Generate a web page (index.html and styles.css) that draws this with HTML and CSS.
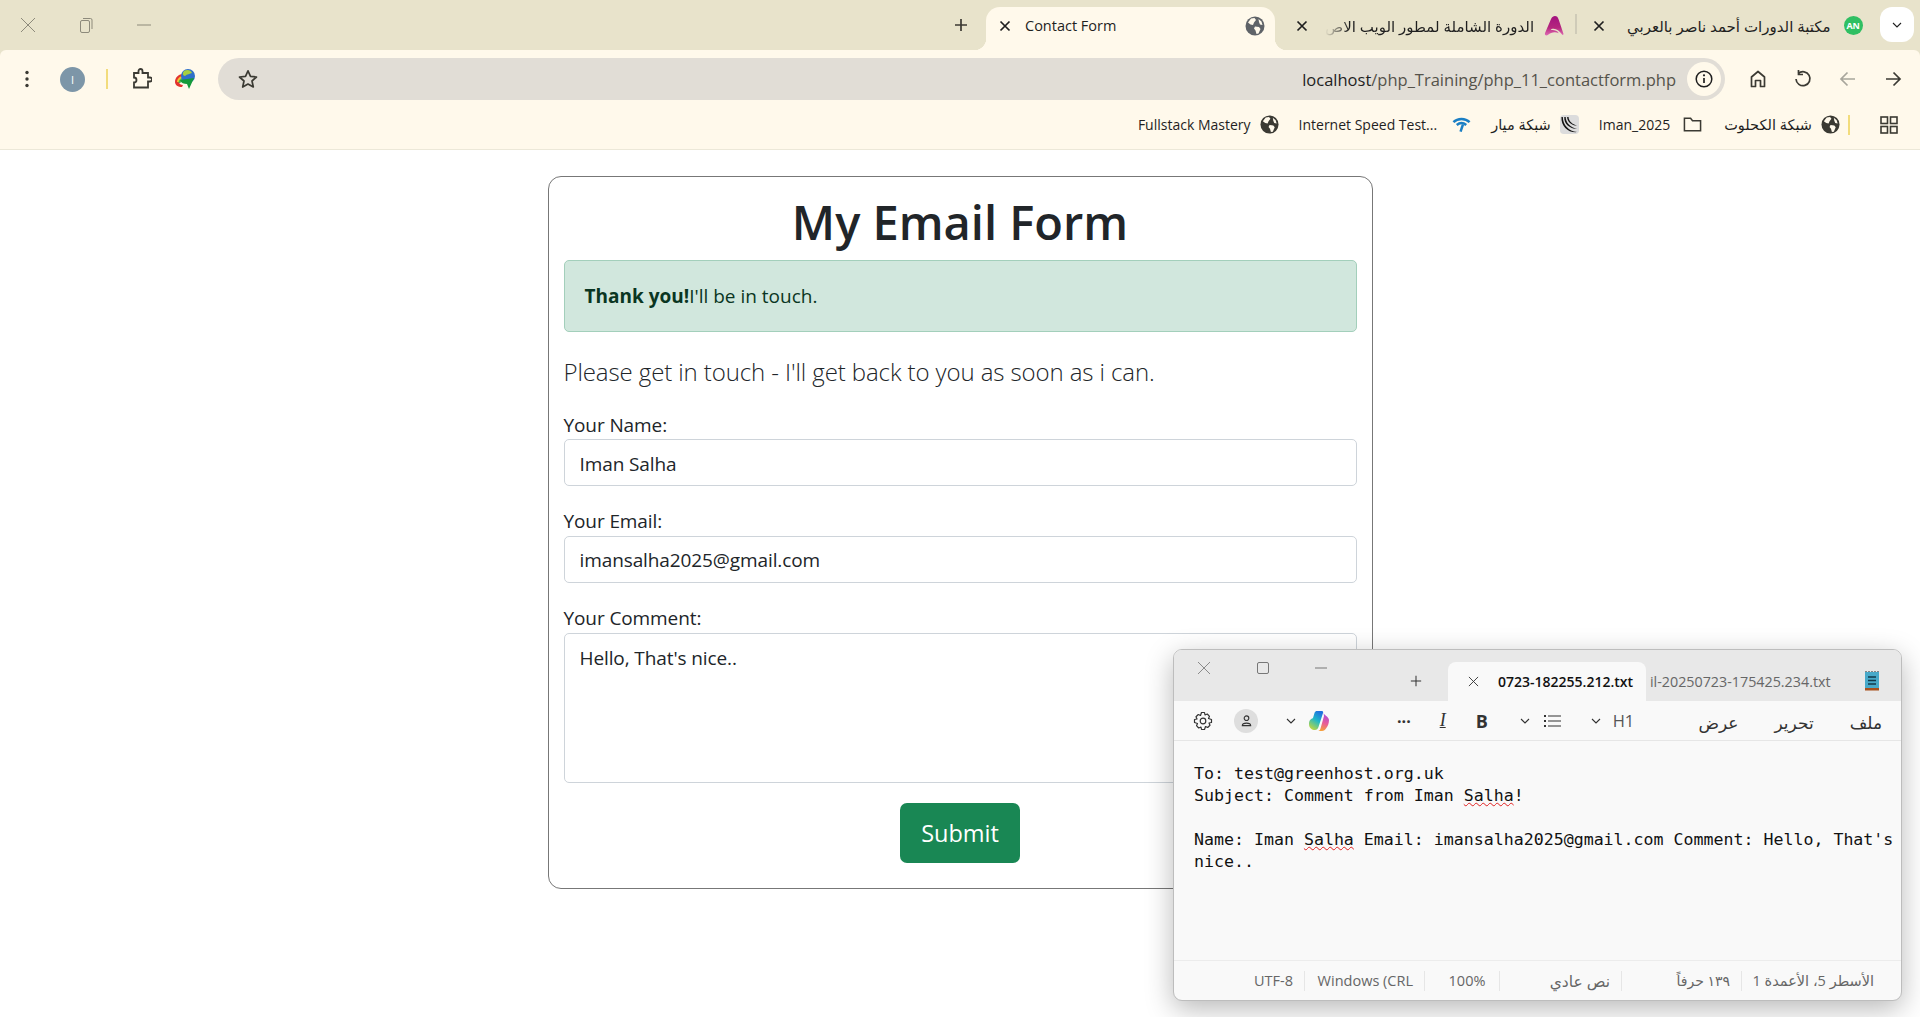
FILE: index.html
```html
<!DOCTYPE html>
<html lang="en">
  <head>
    <meta charset="UTF-8" />
    <meta name="viewport" content="width=device-width, initial-scale=1.0" />
    <title>Contact Form</title>
    <link rel="stylesheet" href="styles.css">
  </head>

  <body>
    <svg class="defs" width="0" height="0">
      <defs>
        <linearGradient id="logoA" x1="0" y1="0" x2="0" y2="1">
          <stop offset="0" stop-color="#a3127f" />
          <stop offset="0.6" stop-color="#b5267e" />
          <stop offset="1" stop-color="#e06cb4" />
        </linearGradient>
        <linearGradient id="cpLeft" x1="0.7" y1="0" x2="0.2" y2="1">
          <stop offset="0" stop-color="#1f6fe0" />
          <stop offset="0.45" stop-color="#1fb8c8" />
          <stop offset="1" stop-color="#c6d83a" />
        </linearGradient>
        <linearGradient id="cpRight" x1="0.6" y1="0" x2="0.4" y2="1">
          <stop offset="0" stop-color="#a24be0" />
          <stop offset="0.55" stop-color="#e85a9a" />
          <stop offset="1" stop-color="#f6a13a" />
        </linearGradient>
      </defs>
      <symbol id="globe" viewBox="0 0 20 20">
        <circle cx="10" cy="10" r="9.500" fill="currentColor" />
        <path d="M6 2.500 9.500 2l1.500 2-2 2.500-1 2.500-2.500-.5L3 6.500zM10 10.500l4 .5 1.500 2-2 4.500-2 .5-1-3.500-1.500-2zM13.500 3l3 2.500 1 3.500-2.500-.5-1-2.500z" fill="#fff9eb" />
      </symbol>
      <symbol id="close" viewBox="0 0 12 12">
        <path d="M1.500 1.500 10.500 10.500M10.500 1.500 1.500 10.500" fill="none" stroke="currentColor" stroke-width="1.700" />
      </symbol>
      <symbol id="chev" viewBox="0 0 12 12">
        <path d="M2 4l4 4 4-4" fill="none" stroke="currentColor" stroke-width="1.100" />
      </symbol>
    </svg>

    <header class="chrome">
      <div class="tabstrip">
        <div class="winctl">
          <svg class="wc" viewBox="0 0 16 16"><path d="M1 1 15 15M15 1 1 15" stroke="#8d8a7b" fill="none" /></svg>
          <svg class="wc" viewBox="0 0 16 16"><rect x="2.500" y="3.500" width="9" height="12" rx="1.500" fill="none" stroke="#8d8a7b" /><path d="M5 1.500h7.500a1.500 1.500 0 0 1 1.500 1.500v9" fill="none" stroke="#8d8a7b" /></svg>
          <svg class="wc" viewBox="0 0 16 16"><path d="M1 8H15" stroke="#8d8a7b" /></svg>
        </div>
        <svg class="newtab" viewBox="0 0 14 14"><path d="M7 1V13M1 7H13" stroke="#3b3a33" stroke-width="1.700" /></svg>
        <div class="tab tab-active">
          <svg class="tab-x"><use href="#close" /></svg>
          <span class="tab-title">Contact Form</span>
          <svg class="tab-ico globe-grey"><use href="#globe" /></svg>
        </div>
        <div class="tab tab-two">
          <svg class="tab-x"><use href="#close" /></svg>
          <span class="tab-title tab-fade" dir="rtl">الدورة الشاملة لمطور الويب الاص</span>
          <svg class="tab-ico" viewBox="0 0 20 21"><path d="M11 0C13 0 14 1 15 4L20 19C20 20 19 20 18.500 19.500 16 16 12.500 13.500 9.500 13.500 8 13.500 7 14 6.500 15 9 14.500 13 15 15 18 11 16.500 7 17 3.500 20 2 21 0 20 .5 18L7 3C8 1 9.500 0 11 0z" fill="url(#logoA)" /></svg>
        </div>
        <div class="tab tab-three">
          <svg class="tab-x"><use href="#close" /></svg>
          <span class="tab-title" dir="rtl">مكتبة الدورات أحمد ناصر بالعربي</span>
          <span class="an-badge">AN</span>
        </div>
        <div class="tab-search">
          <svg class="chev-ico"><use href="#chev" /></svg>
        </div>
      </div>

      <div class="toolbar">
        <svg class="dots" viewBox="0 0 4 18"><circle cx="2" cy="2.500" r="1.700" /><circle cx="2" cy="9" r="1.700" /><circle cx="2" cy="15.500" r="1.700" /></svg>
        <span class="profile">I</span>
        <span class="tool-sep"></span>
        <svg class="tool-ico ext" viewBox="0 0 22 22"><path d="M4 5H8.500V3a2 2 0 0 1 4 0V5H18V9.500H20a2 2 0 0 1 0 4H18V19.500H4V14.500a2.500 2.500 0 0 0 0-5z" fill="none" stroke="#3b3a33" stroke-width="1.800" /></svg>
        <svg class="tool-ico idm" viewBox="0 0 22 22">
          <path d="M1 14C1 9 5 6 9 6L10 9C7 9 5 11 5 14 5 16 7 17 9 17L8 19C4 19 1 17 1 14z" fill="#e3342f" />
          <path d="M3 14C3 11 6 8 9 8L9.500 10C7 10 5.500 12 5.500 14z" fill="#f4c430" />
          <path d="M4.500 15C4.500 12 7 10 9 10L9.500 11.500C8 12 6.500 13.500 6.500 15z" fill="#4cb848" />
          <circle cx="14" cy="8" r="7" fill="#2e6fc9" />
          <path d="M10 3c3-2 7-1 8 2-2 1-5 1-7 3-2 0-3-3-1-5z" fill="#a6cf3e" />
          <path d="M6 12 20 10 15 21 13 16C10 16 7 15 6 12z" fill="#159a3a" />
        </svg>
        <div class="omnibox">
          <svg class="star" viewBox="0 0 20 20"><path d="M10 1.800 12.500 7.400 18.500 8 14 12 15.300 18 10 15 4.700 18 6 12 1.500 8 7.500 7.400z" fill="none" stroke="#3b3a33" stroke-width="1.700" stroke-linejoin="round" /></svg>
          <span class="url"><b>localhost</b>/php_Training/php_11_contactform.php</span>
          <span class="site-info">
            <svg viewBox="0 0 18 18"><circle cx="9" cy="9" r="7.800" fill="none" stroke="#1f1f1f" stroke-width="1.500" /><path d="M9 8V13" stroke="#1f1f1f" stroke-width="1.700" /><circle cx="9" cy="5.300" r="1.100" fill="#1f1f1f" /></svg>
          </span>
        </div>
        <svg class="nav-ico" viewBox="0 0 20 20"><path d="M3.500 17.500V8L10 2.500 16.500 8V17.500H12.500V11.500H7.500V17.500z" fill="none" stroke="#3b3a33" stroke-width="1.700" stroke-linejoin="round" /></svg>
        <svg class="nav-ico" viewBox="0 0 20 20"><path d="M5.300 4.500A7 7 0 1 1 3 10" fill="none" stroke="#3b3a33" stroke-width="1.700" /><path d="M5.500 1V5.500H10" fill="none" stroke="#3b3a33" stroke-width="1.700" /></svg>
        <svg class="nav-ico" viewBox="0 0 20 20"><path d="M17 10H3.500M9.500 3.500 3 10l6.500 6.500" fill="none" stroke="#a8a69c" stroke-width="1.700" /></svg>
        <svg class="nav-ico" viewBox="0 0 20 20"><path d="M3 10H16.500M10.500 3.500 17 10l-6.500 6.500" fill="none" stroke="#3b3a33" stroke-width="1.700" /></svg>
      </div>

      <div class="bookmarks">
        <div class="bm">
          <span>Fullstack Mastery</span>
          <svg class="bm-ico"><use href="#globe" /></svg>
        </div>
        <div class="bm bm-wifi">
          <span>Internet Speed Test...</span>
          <svg class="bm-ico" viewBox="0 0 20 16"><g fill="none" stroke="#1b7fc4" stroke-width="2.600"><path d="M1.500 5.500C6 1 14 1 18.500 5.500" /><path d="M5 8.500C8 6 12 6 15 8.500" /><path d="M11.500 8 9 15.500" /></g></svg>
        </div>
        <div class="bm">
          <span class="bm-ar" dir="rtl">شبكة ميار</span>
          <svg class="bm-ico" viewBox="0 0 20 20"><rect width="20" height="20" rx="4" fill="#dcdcdc" /><path d="M3 2C3 10 9 17 18 18 9 19 1 12 1.500 2zM6 2C6 8 11 13 18 14.500 10 14.500 4 9 4.500 2zM9 2C9 6 13 10 18 11 12 11 7.500 7 7.500 2z" fill="#141414" /></svg>
        </div>
        <div class="bm bm-folder">
          <span>Iman_2025</span>
          <svg class="bm-ico" viewBox="0 0 20 20"><path d="M1.500 3.500H8L10 6H18.500V16.500H1.500z" fill="none" stroke="#3b3a33" stroke-width="1.600" /></svg>
        </div>
        <div class="bm bm-last">
          <span class="bm-ar" dir="rtl">شبكة الكحلوت</span>
          <svg class="bm-ico"><use href="#globe" /></svg>
        </div>
        <span class="bm-sep"></span>
        <svg class="apps" viewBox="0 0 18 18"><g fill="none" stroke="#3b3a33" stroke-width="1.600"><rect x="1" y="1" width="6.500" height="6.500" /><rect x="10.500" y="1" width="6.500" height="6.500" /><rect x="1" y="10.500" width="6.500" height="6.500" /><rect x="10.500" y="10.500" width="6.500" height="6.500" /></g></svg>
      </div>
    </header>

    <main class="card">
      <h1 class="title">My Email Form</h1>
      <div class="alert"><strong>Thank you!</strong>I'll be in touch.</div>
      <p class="lead">Please get in touch - I'll get back to you as soon as i can.</p>
      <form>
        <div class="field">
          <label for="name">Your Name:</label>
          <input id="name" class="control" type="text" value="Iman Salha" />
        </div>
        <div class="field">
          <label for="email">Your Email:</label>
          <input id="email" class="control" type="text" value="imansalha2025@gmail.com" />
        </div>
        <div class="field">
          <label for="comment">Your Comment:</label>
          <textarea id="comment" class="control area">Hello, That's nice..</textarea>
        </div>
        <div class="actions">
          <button type="button" class="btn">Submit</button>
        </div>
      </form>
    </main>

    <section class="notepad">
      <div class="np-title">
        <svg class="np-wc np-close" viewBox="0 0 14 14"><path d="M1 1 13 13M13 1 1 13" stroke="#8a8a8a" fill="none" /></svg>
        <svg class="np-wc np-max" viewBox="0 0 14 14"><rect x="1.500" y="1.500" width="11" height="11" rx="1.500" stroke="#777" fill="none" /></svg>
        <svg class="np-wc np-min" viewBox="0 0 14 14"><path d="M1 7H13" stroke="#777" /></svg>
        <svg class="np-plus" viewBox="0 0 14 14"><path d="M7 1V13M1 7H13" stroke="#333" stroke-width="1.200" /></svg>
        <div class="np-tab">
          <svg class="np-tab-x" viewBox="0 0 12 12"><path d="M1 1 11 11M11 1 1 11" stroke="#333" fill="none" /></svg>
          <span>0723-182255.212.txt</span>
        </div>
        <span class="np-tab-other">il-20250723-175425.234.txt</span>
        <svg class="np-ico" viewBox="0 0 16 20"><rect x="1" y="1" width="14" height="16" fill="#48a9c9" /><rect x="1" y="17" width="14" height="2.500" fill="#a8501c" /><path d="M4 6H12M4 9.500H12M4 13H12" stroke="#10384a" stroke-width="1.400" /><path d="M2 1V0M5 1V0M8 1V0M11 1V0M14 1V0" stroke="#222" /></svg>
      </div>

      <div class="np-tools">
        <svg class="nt gear" viewBox="0 0 20 20"><circle cx="10" cy="10" r="2.800" fill="none" stroke="#333" stroke-width="1.200" /><path d="M8.500 1.500H11.500L12 4 14.300 3 16.500 5.300 15.500 7.500 18.500 8.500V11.500L16 12 17 14.300 14.700 16.500 12.500 15.500 11.500 18.500H8.500L8 16 5.700 17 3.500 14.700 4.500 12.500 1.500 11.500V8.500L4 8 3 5.700 5.300 3.500 7.500 4.500z" fill="none" stroke="#333" stroke-width="1.200" stroke-linejoin="round" /></svg>
        <span class="nt-user"><svg viewBox="0 0 14 14"><circle cx="7" cy="4.500" r="2.500" fill="none" stroke="#333" stroke-width="1.200" /><path d="M2.500 12.500C2.500 9 11.500 9 11.500 12.500z" fill="none" stroke="#333" stroke-width="1.200" /></svg></span>
        <svg class="nt nt-c1"><use href="#chev" /></svg>
        <svg class="nt copilot" viewBox="0 0 20 20">
          <path d="M8 0H13C14 0 14.500 1 14 2L9.500 16C9 18 7.500 19 6 19 3 19 0 17 0 13 0 9 2 8 4 7L5.500 2C6 .5 7 0 8 0z" fill="url(#cpLeft)" />
          <path d="M14.500 1.500C15 5 19.500 5 20 9 20 12 19 15 17 17.500 16 19 15 20 13 20H9C10.500 20 11 19 11.500 17.500L15 5z" fill="url(#cpRight)" />
        </svg>
        <span class="nt-more">···</span>
        <span class="nt-i">I</span>
        <span class="nt-b">B</span>
        <svg class="nt nt-c2"><use href="#chev" /></svg>
        <svg class="nt nt-list" viewBox="0 0 18 14"><path d="M5 2H18M5 7H18M5 12H18" stroke="#333" stroke-width="1.200" /><path d="M1 2H3M1 7H3M1 12H3" stroke="#333" stroke-width="1.800" /></svg>
        <svg class="nt nt-c3"><use href="#chev" /></svg>
        <span class="nt-h1">H1</span>
        <div class="np-menu">
          <span dir="rtl">عرض</span>
          <span dir="rtl">تحرير</span>
          <span dir="rtl">ملف</span>
        </div>
      </div>

      <div class="np-body">To: test@greenhost.org.uk<br>Subject: Comment from Iman <span class="typo">Salha</span>!<br><br>Name: Iman <span class="typo">Salha</span> Email: imansalha2025@gmail.com Comment: Hello, That's<br>nice..</div>

      <div class="np-status">
        <span class="st st-enc">UTF-8</span>
        <span class="st st-eol">Windows (CRL</span>
        <span class="st st-zoom">100%</span>
        <span class="st st-type" dir="rtl">نص عادي</span>
        <span class="st st-count" dir="rtl">١٣٩ حرفاً</span>
        <span class="st st-pos" dir="rtl">الأسطر 5، الأعمدة 1</span>
      </div>
    </section>
  </body>
</html>
```

FILE: styles.css
```css
* {
  box-sizing: border-box;
}

html,
body {
  margin: 0;
  height: 1017px;
  overflow: hidden;
}

body {
  position: relative;
  background: #fff;
  color: #212529;
  font-family: "Open Sans", "DejaVu Sans", sans-serif;
}

.defs {
  position: absolute;
}

/* browser chrome */
.chrome {
  background: #e8e3cb;
  color: #1f1f1f;
}

.tabstrip {
  height: 50px;
  display: flex;
  align-items: flex-end;
}

.winctl {
  display: flex;
  align-items: center;
  gap: 42px;
  height: 50px;
  padding-left: 20px;
  width: 954px;
}

.wc {
  width: 16px;
  height: 16px;
}

.newtab {
  width: 14px;
  height: 14px;
  margin-bottom: 18px;
}

.tab {
  height: 43px;
  padding-bottom: 6px !important;
  display: flex;
  align-items: center;
  font-size: 14px;
}

.tab-active {
  position: relative;
  width: 289px;
  margin-left: 18px;
  background: #fff9eb;
  border-radius: 14px 14px 0 0;
  padding: 0 10px 0 13px;
}

/* little flares where the active tab meets the toolbar */
.tab-active::before,
.tab-active::after {
  content: "";
  position: absolute;
  bottom: 0;
  width: 12px;
  height: 12px;
}

.tab-active::before {
  left: -12px;
  background: radial-gradient(circle at 0 0, #e8e3cb 12px, #fff9eb 12.500px);
}

.tab-active::after {
  right: -12px;
  background: radial-gradient(circle at 100% 0, #e8e3cb 12px, #fff9eb 12.500px);
}

.tab-two {
  width: 301px;
  padding: 0 14px 0 21px;
  position: relative;
}

.tab-two::after {
  content: "";
  position: absolute;
  right: -1px;
  top: 7px;
  height: 20px;
  width: 2px;
  background: #cfcbb8;
}

.tab-three {
  width: 304px;
  padding: 0 23px 0 17px;
}

.tab-x {
  width: 12px;
  height: 12px;
  flex: none;
  color: #1f1f1f;
}

.tab-title {
  flex: 1;
  margin-left: 14px;
  white-space: nowrap;
}

.tab-active .tab-title {
  font-size: 14.500px;
  margin-top: -1px;
}

.tab-fade {
  -webkit-mask-image: linear-gradient(to right, transparent, #000 24px);
  mask-image: linear-gradient(to right, transparent, #000 24px);
  margin-left: 17px;
  text-align: right;
  font-size: 15px;
}

.tab-three .tab-title {
  font-size: 15px;
  margin-left: 22px;
  text-align: right;
}

.tab-ico {
  width: 20px;
  height: 20px;
  flex: none;
  margin-left: 10px;
}

.globe-grey {
  color: #5f6368;
}

.an-badge {
  flex: none;
  width: 19px;
  height: 19px;
  margin-left: 13px;
  border-radius: 50%;
  background: #2fbf62;
  color: #fff;
  font-size: 9px;
  font-weight: 700;
  line-height: 19px;
  text-align: center;
}

.tab-search {
  width: 34px;
  height: 35px;
  margin: 0 6px 8px 0;
  background: #fff;
  border-radius: 12px;
  display: flex;
  align-items: center;
  justify-content: center;
}

.chev-ico {
  width: 12px;
  height: 12px;
  color: #1f1f1f;
}

.toolbar {
  height: 50px;
  background: #fff9eb;
  display: flex;
  align-items: center;
  padding-top: 8px;
  border-radius: 6px 6px 0 0;
}

.dots {
  width: 4px;
  height: 18px;
  margin-left: 25px;
  fill: #3b3a33;
}

.profile {
  width: 25px;
  height: 25px;
  margin-left: 31px;
  border-radius: 50%;
  background: #7d96a8;
  color: #fff;
  font-size: 11px;
  line-height: 25px;
  text-align: center;
}

.tool-sep {
  width: 2px;
  height: 20px;
  margin-left: 21px;
  background: #f2dc7c;
}

.tool-ico {
  width: 22px;
  height: 22px;
}

.ext {
  margin-left: 22px;
}

.idm {
  margin-left: 22px;
}

.omnibox {
  width: 1507px;
  height: 42px;
  margin-left: 22px;
  background: #e1ddd6;
  border-radius: 21px;
  display: flex;
  align-items: center;
  padding: 0 4px 0 20px;
}

.star {
  width: 20px;
  height: 20px;
}

.url {
  margin-left: auto;
  font-size: 16.500px;
  color: #55534b;
}

.url b {
  font-weight: 400;
  color: #1f1f1f;
}

.site-info {
  width: 34px;
  height: 34px;
  margin-left: 11px;
  border-radius: 50%;
  background: #fff9eb;
  display: flex;
  align-items: center;
  justify-content: center;
}

.site-info svg {
  width: 18px;
  height: 18px;
}

.nav-ico {
  width: 20px;
  height: 20px;
  margin-left: 25px;
}

.omnibox + .nav-ico {
  margin-left: 23px;
}

.bookmarks {
  height: 50px;
  background: #fff9eb;
  border-bottom: 1px solid #ece8d8;
  display: flex;
  align-items: center;
  justify-content: flex-end;
  gap: 20px;
  padding-right: 22px;
  font-size: 14px;
}

.bm {
  display: flex;
  align-items: center;
  gap: 9px;
  white-space: nowrap;
}

.bm-ar {
  font-size: 14.500px;
}

.bm-folder {
  gap: 13px;
}

.bm-wifi {
  gap: 15px;
}

.bm-last {
  margin-left: 2px;
}

.bm-ico {
  width: 19px;
  height: 19px;
  flex: none;
  color: #3b3a33;
}

.bm-sep {
  width: 2px;
  height: 20px;
  background: #f2dc7c;
  margin-left: -12px;
}

.apps {
  width: 18px;
  height: 18px;
  margin-left: 10px;
}

/* contact form */
.card {
  width: 825px;
  height: 713px;
  margin: 26px auto 0;
  padding: 13px 15px 0;
  border: 1px solid #777;
  border-radius: 13px;
}

.title {
  margin: 0 0 10px;
  padding-top: 2px;
  height: 60px;
  font-size: 47px;
  font-weight: 600;
  line-height: 60px;
  text-align: center;
}

.alert {
  height: 72px;
  margin-bottom: 20px;
  padding: 20px;
  font-size: 19px;
  line-height: 30px;
  color: #0a3622;
  background: #d1e7dd;
  border: 1px solid #a3cfbb;
  border-radius: 5px;
}

.lead {
  margin: 0 0 20px;
  padding-top: 2px;
  font-size: 24px;
  font-weight: 300;
  line-height: 35.500px;
  letter-spacing: -0.1px;
}

.field {
  margin-bottom: 20px;
}

.field label {
  display: block;
  padding-top: 2px;
  font-size: 19px;
  line-height: 27.600px;
  letter-spacing: -0.1px;
}

.control {
  display: block;
  width: 100%;
  height: 47.200px;
  padding: 9px 15px 7px;
  border: 1px solid #ced4da;
  border-radius: 5px;
  background: #fff;
  color: #212529;
  font-family: inherit;
  font-size: 19px;
  line-height: 30px;
  letter-spacing: -0.1px;
}

.area {
  height: 150px;
  resize: none;
}

.actions {
  display: flex;
  justify-content: center;
}

.btn {
  width: 120px;
  height: 60px;
  padding-top: 2px;
  border: none;
  border-radius: 7px;
  background: #198754;
  color: #fff;
  font-family: inherit;
  font-size: 23.500px;
}

/* notepad window on top of the page */
.notepad {
  position: absolute;
  left: 1173px;
  top: 649px;
  width: 729px;
  height: 352px;
  background: #f9f9f9;
  border: 1px solid #bdbdbd;
  border-radius: 9px;
  box-shadow: 0 8px 28px rgba(0, 0, 0, 0.28);
  overflow: hidden;
  display: flex;
  flex-direction: column;
}

.np-title {
  height: 51px;
  flex: none;
  background: #e8e8e8;
  display: flex;
  align-items: flex-end;
  font-size: 14px;
}

.np-wc {
  width: 14px;
  height: 14px;
  align-self: flex-start;
  margin-top: 11px;
}

.np-close {
  margin-left: 23px;
}

.np-max {
  margin-left: 45px;
}

.np-min {
  margin-left: 44px;
}

.np-plus {
  width: 12px;
  height: 12px;
  margin: 0 0 14px 82px;
}

.np-tab {
  width: 198px;
  height: 39px;
  margin-left: 26px;
  background: #f9f9f9;
  border-radius: 8px 8px 0 0;
  display: flex;
  align-items: center;
  font-size: 14px;
  font-weight: 600;
  color: #111;
  white-space: nowrap;
  overflow: hidden;
}

.np-tab-x {
  width: 11px;
  height: 11px;
  flex: none;
  margin: 0 19px 0 20px;
}

.np-tab-other {
  width: 206px;
  margin: 0 0 10px 4px;
  font-size: 14.300px;
  color: #666;
  white-space: nowrap;
  overflow: hidden;
}

.np-ico {
  width: 16px;
  height: 20px;
  margin: 0 0 10px 8px;
}

.np-tools {
  height: 40px;
  flex: none;
  border-bottom: 1px solid #e6e6e6;
  display: flex;
  align-items: center;
  color: #333;
}

.nt {
  width: 12px;
  height: 12px;
  flex: none;
  color: #333;
}

.gear {
  width: 20px;
  height: 20px;
  margin-left: 19px;
}

.nt-user {
  width: 24px;
  height: 24px;
  margin-left: 21px;
  border-radius: 50%;
  background: #dedede;
  display: flex;
  align-items: center;
  justify-content: center;
}

.nt-user svg {
  width: 13px;
  height: 13px;
}

.nt-c1 {
  margin-left: 27px;
}

.copilot {
  width: 20px;
  height: 20px;
  margin-left: 12px;
}

.nt-more {
  margin-left: 68px;
  font-size: 16px;
  font-weight: 700;
}

.nt-i {
  width: 18px;
  margin-left: 23px;
  font-family: "Liberation Serif", serif;
  font-style: italic;
  font-size: 18px;
  text-align: center;
  text-decoration: underline;
}

.nt-b {
  width: 16px;
  margin-left: 22px;
  font-size: 18px;
  font-weight: 700;
  text-align: center;
}

.nt-c2 {
  margin-left: 29px;
}

.nt-list {
  width: 18px;
  height: 14px;
  margin-left: 12px;
}

.nt-c3 {
  margin-left: 29px;
}

.nt-h1 {
  margin-left: 11px;
  font-size: 16.500px;
  color: #555;
}

.np-menu {
  margin-left: auto;
  padding: 4px 19px 0 0;
  display: flex;
  gap: 36px;
  font-size: 17px;
}

.np-body {
  flex: 1;
  padding: 22px 20px 0;
  font-family: "DejaVu Sans Mono", monospace;
  font-size: 16.600px;
  line-height: 22px;
  color: #111;
  white-space: nowrap;
  overflow: hidden;
}

.typo {
  text-decoration: underline wavy #e02020 1px;
}

.np-status {
  height: 40px;
  flex: none;
  border-top: 1px solid #ececec;
  display: flex;
  align-items: center;
  font-size: 14.500px;
  color: #666;
}

.st {
  height: 20px;
  padding-right: 11px;
  line-height: 20px;
  text-align: right;
  white-space: nowrap;
  border-right: 1px solid #e6e6e6;
}

.st-enc {
  margin-left: 70px;
  width: 61px;
}

.st-eol {
  width: 120px;
}

.st-zoom {
  width: 75px;
  padding: 0 0 0 10px;
  text-align: center;
}

.st-type {
  width: 122px;
  font-size: 15.500px;
}

.st-count {
  width: 120px;
  font-size: 14px;
}

.st-pos {
  width: 132px;
  padding-right: 0;
  border-right: none;
}
```
